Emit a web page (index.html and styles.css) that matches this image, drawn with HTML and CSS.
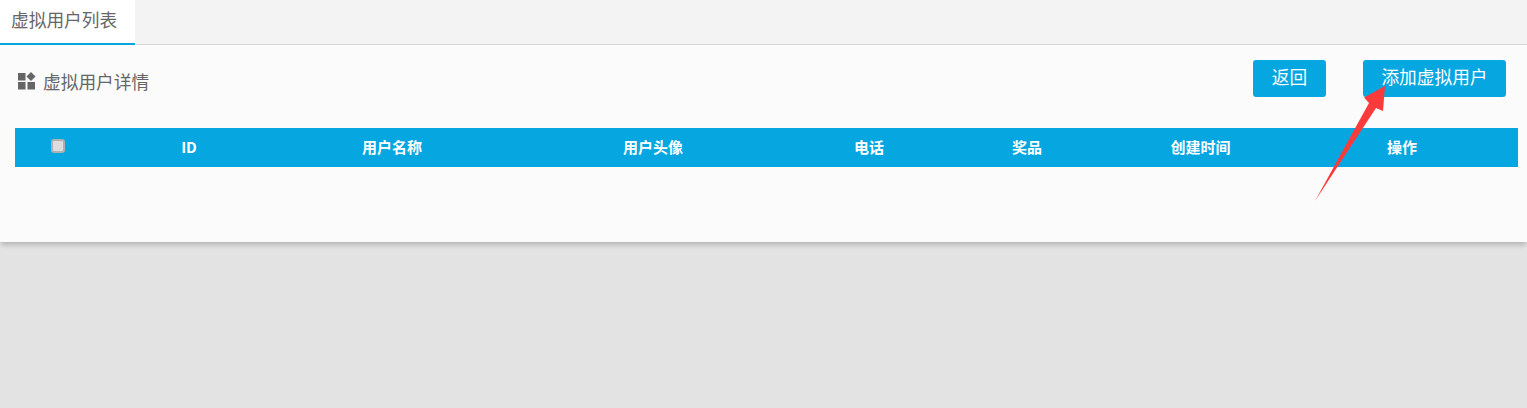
FILE: index.html
```html
<!DOCTYPE html>
<html lang="zh-CN">

<head>
    <meta charset="UTF-8">
    <title>虚拟用户列表</title>
    <link rel="stylesheet" href="styles.css">
</head>

<body>
    <div class="tabs">
        <div class="tab active">虚拟用户列表</div>
    </div>

    <div class="panel">
        <div class="panel-head">
            <div class="panel-title">
                <svg class="title-icon" width="18" height="18" viewBox="0 0 18 18">
                    <rect x="0" y="1" width="7.5" height="7.5" fill="#666"/>
                    <path d="M13 0 L17.5 4.5 L13 9 L8.5 4.5 Z" fill="#666"/>
                    <rect x="0" y="10" width="7.5" height="7.5" fill="#666"/>
                    <rect x="9.5" y="10" width="7.5" height="7.5" fill="#666"/>
                </svg>
                <span>虚拟用户详情</span>
            </div>
            <div class="actions">
                <button class="btn btn-back">返回</button>
                <button class="btn">添加虚拟用户</button>
            </div>
        </div>

        <div class="table-head">
            <div class="cell"><input type="checkbox" class="check"></div>
            <div class="cell">ID</div>
            <div class="cell">用户名称</div>
            <div class="cell">用户头像</div>
            <div class="cell">电话</div>
            <div class="cell">奖品</div>
            <div class="cell">创建时间</div>
            <div class="cell">操作</div>
        </div>
    </div>

    <svg class="arrow" width="80" height="125" viewBox="0 0 80 125">
        <path d="M1 116 L55 18 L50 12.5 L71 1 L69 26 L62 23 Z" fill="#fb3b3b"/>
    </svg>
</body>

</html>
```

FILE: styles.css
```css
* {
    box-sizing: border-box;
}

body {
    margin: 0;
    height: 408px;
    overflow: hidden;
    position: relative;
    background-color: #e3e3e3;
    font-family: "Noto Sans CJK SC", "Liberation Sans", sans-serif;
    color: #666;
}

.tabs {
    display: flex;
    height: 45px;
    background-color: #f3f3f3;
    border-bottom: 1px solid #d9d9d9;
}

.tab {
    width: 135px;
    height: 45px;
    padding-left: 11px;
    font-size: 17.7px;
    line-height: 39px;
}

.tab.active {
    background-color: #fff;
    border-bottom: 2px solid #06a7e1;
}

.panel {
    height: 197px;
    padding: 15px 9px 0 15px;
    background-color: #fbfbfb;
    box-shadow: 0 4px 5px -1px rgba(0, 0, 0, 0.2);
}

.panel-head {
    display: flex;
    justify-content: space-between;
    height: 68px;
    padding-right: 12px;
}

.panel-title {
    display: flex;
    align-items: center;
    gap: 7px;
    height: 45px;
    padding-left: 3px;
    padding-bottom: 3px;
    font-size: 17.7px;
}

.actions {
    display: flex;
    gap: 37px;
}

.btn {
    width: 143px;
    height: 37px;
    padding: 0 0 6px;
    border: none;
    border-radius: 3px;
    background-color: #06a7e1;
    color: #fff;
    font-family: inherit;
    font-size: 17.7px;
}

.btn-back {
    width: 73px;
}

.table-head {
    display: grid;
    grid-template-columns: 86px 176px 230px 292px 140px 176px 171px 232px;
    height: 39px;
    padding-bottom: 2px;
    background-color: #06a7e1;
    color: #fff;
    font-size: 15px;
    font-weight: bold;
}

.cell {
    display: flex;
    align-items: center;
    justify-content: center;
}

.check {
    appearance: none;
    width: 14px;
    height: 14px;
    margin: 0 0 1px;
    background-color: #ddd;
    border: 2px solid #b0b0b0;
    border-radius: 3px;
}

.arrow {
    position: absolute;
    left: 1314px;
    top: 85px;
}
```
